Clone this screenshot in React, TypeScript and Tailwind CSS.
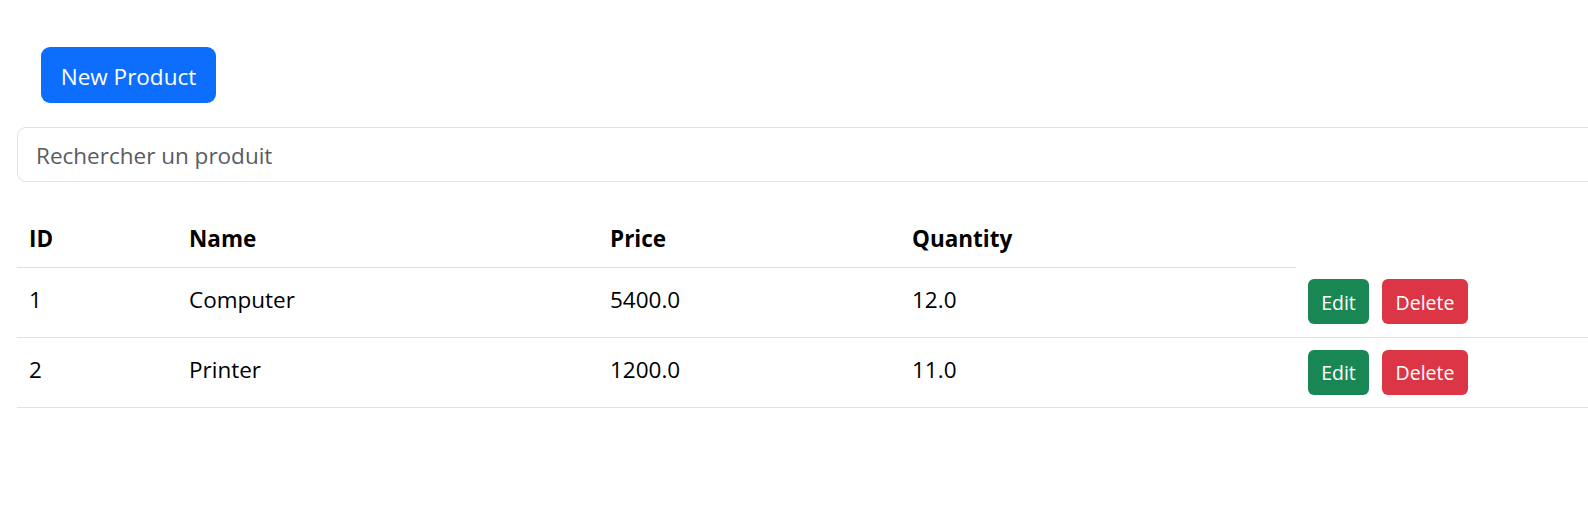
const products = [
  { id: 1, name: 'Computer', price: '5400.0', quantity: '12.0' },
  { id: 2, name: 'Printer', price: '1200.0', quantity: '11.0' },
];

function App() {
  return (
    <div className="w-full h-screen overflow-hidden bg-white" style={{ fontFamily: '"Open Sans", "Noto Sans", sans-serif' }}>
      <div className="w-[1640px] pl-[17px] pt-[47px]">
        {/* New product button */}
        <button className="ml-[24px] h-[56px] w-[175px] pt-[3px] rounded-[9px] bg-[#0d6efd] text-[22.5px] text-white">
          New Product
        </button>

        {/* Search */}
        <div className="mt-[24px]">
          <input
            type="text"
            placeholder="Rechercher un produit"
            className="w-full h-[55px] rounded-[9px] border border-[#dee2e6] px-[18px] pt-[1px] text-[22.5px] text-[#212529] placeholder:text-[#595c5f] outline-none"
          />
        </div>

        {/* Products table */}
        <table className="mt-[25px] w-[1623px] table-fixed border-collapse text-black text-[22.5px]">
          <colgroup>
            <col className="w-[160px]" />
            <col className="w-[421px]" />
            <col className="w-[302px]" />
            <col className="w-[396px]" />
            <col />
          </colgroup>
          <thead>
            <tr className="h-[60px]">
              <th className="px-[12px] pt-[4px] text-left font-bold border-b border-[#dee2e6]">ID</th>
              <th className="px-[12px] pt-[4px] text-left font-bold border-b border-[#dee2e6]">Name</th>
              <th className="px-[12px] pt-[4px] text-left font-bold border-b border-[#dee2e6]">Price</th>
              <th className="px-[12px] pt-[4px] text-left font-bold border-b border-[#dee2e6]">Quantity</th>
            </tr>
          </thead>
          <tbody>
            {products.map((p) => (
              <tr key={p.id} className="h-[70px] border-b border-[#dee2e6]">
                <td className="px-[12px] pb-[4px]">{p.id}</td>
                <td className="px-[12px] pb-[4px]">{p.name}</td>
                <td className="px-[12px] pb-[4px]">{p.price}</td>
                <td className="px-[12px] pb-[4px]">{p.quantity}</td>
                <td className="px-[12px]">
                  <div className="flex gap-[13px]">
                    <button className="h-[45px] w-[61px] pt-[1px] rounded-[6px] bg-[#198754] text-[19.5px] text-white">Edit</button>
                    <button className="h-[45px] w-[86px] pt-[1px] rounded-[6px] bg-[#dc3545] text-[19.5px] text-white">Delete</button>
                  </div>
                </td>
              </tr>
            ))}
          </tbody>
        </table>
      </div>
    </div>
  );
}

export default App;
